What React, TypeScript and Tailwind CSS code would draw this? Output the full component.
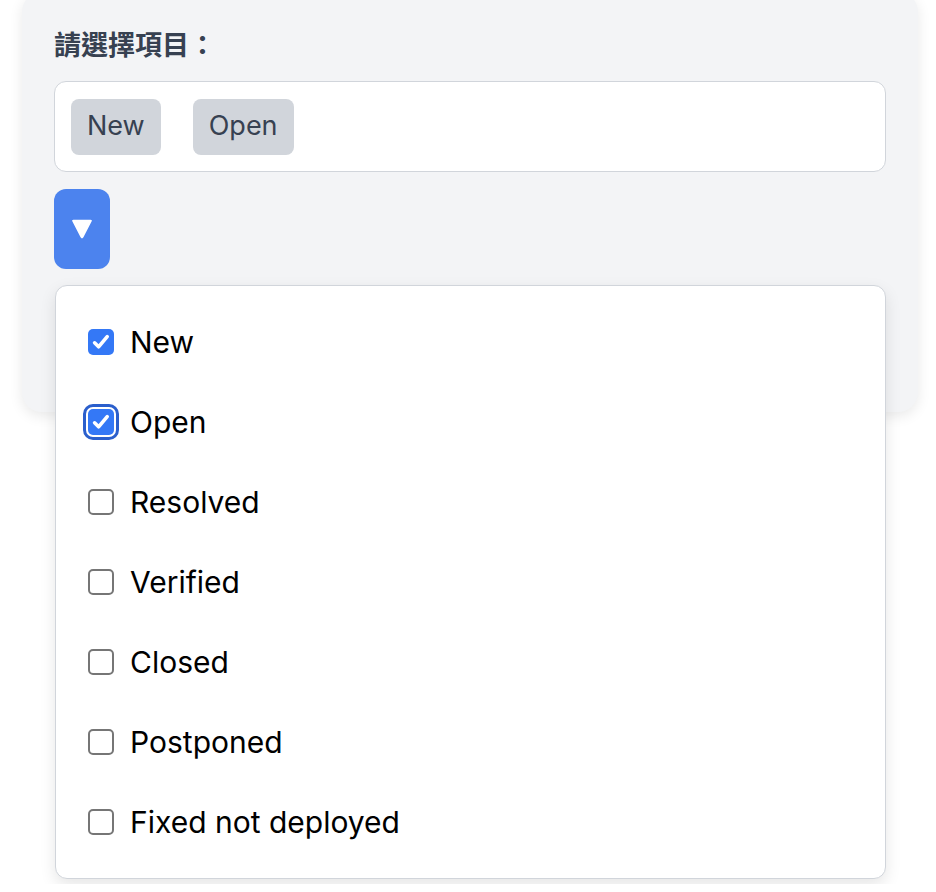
import { useState } from "react";

const options = [
  "New",
  "Open",
  "Resolved",
  "Verified",
  "Closed",
  "Postponed",
  "Fixed not deployed",
];

// Checkbox drawn by hand so it looks like the mac one in the shot
function Box({ checked, focused }: { checked: boolean; focused?: boolean }) {
  return (
    <span
      className={
        "relative flex h-[26px] w-[26px] shrink-0 items-center justify-center rounded-[5px] " +
        (checked ? "bg-[#3478f6]" : "border-2 border-[#767676] bg-white") +
        (focused ? " outline-[3px] outline-solid outline-offset-2 outline-[#2b5fcc]" : "")
      }
    >
      {checked && (
        <svg viewBox="0 0 26 26" className="h-[26px] w-[26px]">
          <path
            d="M6.6 13.8 L10.6 17.8 L19.2 7.6"
            fill="none"
            stroke="white"
            strokeWidth="3.6"
            strokeLinecap="round"
            strokeLinejoin="round"
          />
        </svg>
      )}
    </span>
  );
}

export default function App() {
  const [selected, setSelected] = useState<string[]>(["New", "Open"]);
  const [open, setOpen] = useState(true);

  const toggle = (name: string) =>
    setSelected((prev) =>
      prev.includes(name) ? prev.filter((p) => p !== name) : [...prev, name]
    );

  return (
    <div className="min-h-[892px] w-[936px] bg-white font-['Inter','Noto_Sans_CJK_TC',sans-serif]">
      <div className="ml-[22px] -mt-[8px] w-[896px] rounded-[20px] bg-[#f3f4f6] p-8 shadow-[0_4px_14px_rgba(0,0,0,0.09)]">
        {/* Label */}
        <div className="mb-[17px] font-['Noto_Sans_CJK_TC',sans-serif] text-[27px] font-bold leading-10 text-[#374151]">
          請選擇項目：
        </div>

        {/* Selected chips */}
        <div className="flex h-[91px] items-center gap-8 rounded-xl border border-[#d1d5db] bg-white px-4">
          {options
            .filter((o) => selected.includes(o))
            .map((o) => (
              <span
                key={o}
                className="flex h-14 items-center rounded-lg bg-[#d1d5db] px-4 text-[27px] text-[#374151]"
              >
                {o}
              </span>
            ))}
        </div>

        {/* Toggle button */}
        <button
          onClick={() => setOpen(!open)}
          className="mt-[17px] flex h-20 w-14 items-center justify-center rounded-xl bg-[#4c83ee]"
        >
          <svg viewBox="0 0 20 20" className="h-[22px] w-[22px]">
            <path
              d="M2.2 1.5 L17.8 1.5 Q19.6 1.5 18.7 3.1 L11.3 17.6 Q10 19.6 8.7 17.6 L1.3 3.1 Q0.4 1.5 2.2 1.5 Z"
              fill="white"
            />
          </svg>
        </button>

        {/* Dropdown */}
        <div className="relative mt-4 h-[95px]">
          {open && (
            <div className="absolute left-px right-0 top-0 z-10 rounded-xl border border-[#d1d5db] bg-white py-4 shadow-[0_6px_16px_rgba(0,0,0,0.1)]">
              {options.map((o) => (
                <label
                  key={o}
                  onClick={() => toggle(o)}
                  className="flex h-20 cursor-pointer items-center gap-4 px-8 text-[30px] text-black"
                >
                  <Box checked={selected.includes(o)} focused={o === "Open"} />
                  <span>{o}</span>
                </label>
              ))}
            </div>
          )}
        </div>
      </div>
    </div>
  );
}
